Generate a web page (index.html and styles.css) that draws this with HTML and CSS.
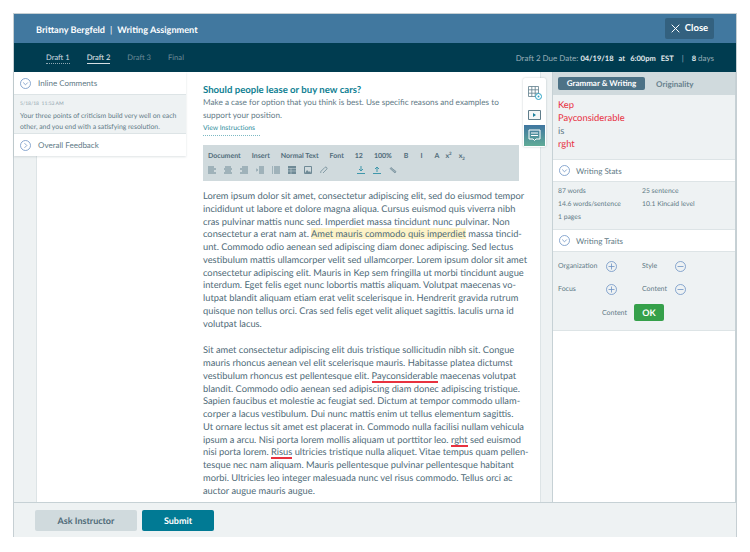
FILE: index.html
```html
<!DOCTYPE html>
<html lang="en">
<head>
<meta charset="utf-8">
<title>Writing Assignment</title>
<link rel="stylesheet" href="styles.css">
</head>
<body>
<div class="window">
  <header class="topbar">
    <div class="who"><span>Brittany Bergfeld</span><span class="pipe">|</span><span>Writing Assignment</span></div>
    <button class="close"><svg width="9" height="9" viewBox="0 0 9 9"><path d="M.7.7l7.6 7.6M8.3.7L.7 8.3" stroke="#fff" stroke-width="1" fill="none"/></svg>Close</button>
  </header>
  <nav class="drafts">
    <div class="tabs">
      <a class="done">Draft 1</a><a class="cur">Draft 2</a><a class="off">Draft 3</a><a class="off">Final</a>
    </div>
    <div class="due">Draft 2 Due Date: <b>04/19/18</b> <b class="gap">at</b> <b class="gap">6:00pm</b> <b class="gap">EST</b><span class="pipe2">|</span><b>8</b> days</div>
  </nav>
  <div class="main">
    <div class="gutter"></div>
    <section class="doc">
      <h1>Should people lease or buy new cars?</h1>
      <p class="prompt">Make a case for option that you think is best. Use specific reasons and examples to<br>support your position.</p>
      <a class="instr">View Instructions</a>
      <div class="toolbar">
        <div class="tb-row tb-words">
          <span class="w1">Document</span><span class="w2">Insert</span><span class="w3">Normal Text</span><span class="w4">Font</span><span class="w5">12</span><span class="w6">100%</span><span class="w7">B</span><span class="w8">I</span><span class="w9">A</span><span class="w10">x<sup>2</sup></span><span>x<sub>2</sub></span>
        </div>
        <div class="tb-row tb-icons">
          <svg width="8" height="8" viewBox="0 0 8 8"><path d="M0 1h6M0 3h8M0 5h6M0 7h8" stroke="#6f8a96"/></svg>
          <svg width="8" height="8" viewBox="0 0 8 8"><path d="M1 1h6M0 3h8M1 5h6M0 7h8" stroke="#6f8a96"/></svg>
          <svg width="8" height="8" viewBox="0 0 8 8"><path d="M2 1h6M0 3h8M2 5h6M0 7h8" stroke="#6f8a96"/></svg>
          <svg width="8" height="8" viewBox="0 0 8 8"><path d="M3 1h5M3 3h5M3 5h5M3 7h5M0 2.500l1.500 1.500L0 5.500" stroke="#6f8a96" fill="none"/></svg>
          <svg width="8" height="8" viewBox="0 0 8 8"><path d="M2 1h6M2 3h6M2 5h6M2 7h6M0 1h1M0 3h1M0 5h1M0 7h1" stroke="#6f8a96"/></svg>
          <svg width="8" height="8" viewBox="0 0 8 8"><path d="M0 0h8v8H0z" fill="#6f8a96"/><path d="M0 2.500h8M0 5h8M3 2v6" stroke="#cfd9dc" stroke-width=".5"/></svg>
          <svg width="8" height="8" viewBox="0 0 8 8"><path d="M.5.500h7v7h-7z" stroke="#6f8a96" fill="none"/><path d="M1 7l2-3 2 2 1-1 1 2z" fill="#6f8a96"/></svg>
          <svg width="8" height="8" viewBox="0 0 8 8"><path d="M1 7a1.200 1.200 0 0 1 0-1.700L5 1.300a1.300 1.300 0 0 1 1.800 1.800L3 7" stroke="#6f8a96" stroke-width=".8" fill="none"/></svg>
          <svg class="ic-far" width="8" height="8" viewBox="0 0 8 8"><path d="M4 0v4.500M2 3l2 2 2-2M0 7.500h8" stroke="#3f97ab" fill="none"/></svg>
          <svg width="8" height="8" viewBox="0 0 8 8"><path d="M4 6V1.500M2 3l2-2 2 2M0 7.500h8" stroke="#3f97ab" fill="none"/></svg>
          <svg width="8" height="8" viewBox="0 0 8 8"><path d="M1 2.500l1-1 5 4-1 1.500z" stroke="#6f8a96" fill="#9db0b9" stroke-width=".7"/></svg>
        </div>
      </div>
      <p class="body">Lorem ipsum dolor sit amet, consectetur adipiscing elit, sed do eiusmod tempor<br>incididunt ut labore et dolore magna aliqua. Cursus euismod quis viverra nibh<br>cras pulvinar mattis nunc sed. Imperdiet massa tincidunt nunc pulvinar. Non<br>consectetur a erat nam at. <mark>Amet mauris commodo quis imperdiet</mark> massa tincid-<br>unt. Commodo odio aenean sed adipiscing diam donec adipiscing. Sed lectus<br>vestibulum mattis ullamcorper velit sed ullamcorper. Lorem ipsum dolor sit amet<br>consectetur adipiscing elit. Mauris in Kep sem fringilla ut morbi tincidunt augue<br>interdum. Eget felis eget nunc lobortis mattis aliquam. Volutpat maecenas vo-<br>lutpat blandit aliquam etiam erat velit scelerisque in. Hendrerit gravida rutrum<br>quisque non tellus orci. Cras sed felis eget velit aliquet sagittis. Iaculis urna id<br>volutpat lacus.</p>
      <p class="body">Sit amet consectetur adipiscing elit duis tristique sollicitudin nibh sit. Congue<br>mauris rhoncus aenean vel elit scelerisque mauris. Habitasse platea dictumst<br>vestibulum rhoncus est pellentesque elit. <span class="typo">Payconsiderable</span> maecenas volutpat<br>blandit. Commodo odio aenean sed adipiscing diam donec adipiscing tristique.<br>Sapien faucibus et molestie ac feugiat sed. Dictum at tempor commodo ullam-<br>corper a lacus vestibulum. Dui nunc mattis enim ut tellus elementum sagittis.<br>Ut ornare lectus sit amet est placerat in. Commodo nulla facilisi nullam vehicula<br>ipsum a arcu. Nisi porta lorem mollis aliquam ut porttitor leo. <span class="typo">rght</span> sed euismod<br>nisi porta lorem. <span class="typo">Risus</span> ultricies tristique nulla aliquet. Vitae tempus quam pellen-<br>tesque nec nam aliquam. Mauris pellentesque pulvinar pellentesque habitant<br>morbi. Ultricies leo integer malesuada nunc vel risus commodo. Tellus orci ac<br>auctor augue mauris augue.</p>
    </section>
    <div class="gutter"></div>
    <aside class="side">
      <div class="sidetabs"><span class="pill">Grammar &amp; Writing</span><span class="orig">Originality</span></div>
      <div class="errors"><div class="err">Kep</div><div class="err">Payconsiderable</div><div>is</div><div class="err">rght</div></div>
      <div class="acc">
        <svg class="circ" width="11" height="11" viewBox="0 0 11 11"><circle cx="5.500" cy="5.500" r="5" stroke="#6d93c4" fill="none" stroke-width=".8"/><path d="M3.200 4.500l2.300 2.300 2.300-2.300" stroke="#6d93c4" fill="none" stroke-width=".8"/></svg>
        Writing Stats</div>
      <div class="stats">
        <span>87 words</span><span>25 sentence</span>
        <span>14.6 words/sentence</span><span>10.1 Kincaid level</span>
        <span>1 pages</span>
      </div>
      <div class="acc">
        <svg class="circ" width="11" height="11" viewBox="0 0 11 11"><circle cx="5.500" cy="5.500" r="5" stroke="#6d93c4" fill="none" stroke-width=".8"/><path d="M3.200 4.500l2.300 2.300 2.300-2.300" stroke="#6d93c4" fill="none" stroke-width=".8"/></svg>
        Writing Traits</div>
      <div class="traits">
        <div class="trow">
          <span class="tl">Organization</span><svg class="pm" width="11" height="11" viewBox="0 0 11 11"><circle cx="5.500" cy="5.500" r="5" stroke="#6d93c4" fill="none" stroke-width=".8"/><path d="M2.500 5.500h6M5.500 2.500v6" stroke="#6d93c4" stroke-width=".8"/></svg>
          <span class="tl2">Style</span><svg class="pm" width="11" height="11" viewBox="0 0 11 11"><circle cx="5.500" cy="5.500" r="5" stroke="#6d93c4" fill="none" stroke-width=".8"/><path d="M2.500 5.500h6" stroke="#6d93c4" stroke-width=".8"/></svg>
        </div>
        <div class="trow">
          <span class="tl">Focus</span><svg class="pm" width="11" height="11" viewBox="0 0 11 11"><circle cx="5.500" cy="5.500" r="5" stroke="#6d93c4" fill="none" stroke-width=".8"/><path d="M2.500 5.500h6M5.500 2.500v6" stroke="#6d93c4" stroke-width=".8"/></svg>
          <span class="tl2">Content</span><svg class="pm" width="11" height="11" viewBox="0 0 11 11"><circle cx="5.500" cy="5.500" r="5" stroke="#6d93c4" fill="none" stroke-width=".8"/><path d="M2.500 5.500h6" stroke="#6d93c4" stroke-width=".8"/></svg>
        </div>
        <div class="okrow"><span>Content</span><button class="ok">OK</button></div>
      </div>
    </aside>
    <div class="comments">
      <div class="chead">
        <svg width="11" height="11" viewBox="0 0 11 11"><circle cx="5.500" cy="5.500" r="5" stroke="#6d93c4" fill="none" stroke-width=".8"/><path d="M3.200 4.500l2.300 2.300 2.300-2.300" stroke="#6d93c4" fill="none" stroke-width=".8"/></svg>
        Inline Comments</div>
      <div class="cbody">
        <div class="cdate">5/18/18  11:53 AM</div>
        <div class="ctext">Your three points of criticism build very well on each<br>other, and you end with a satisfying resolution.</div>
      </div>
      <div class="chead cfoot">
        <svg width="11" height="11" viewBox="0 0 11 11"><circle cx="5.500" cy="5.500" r="5" stroke="#6d93c4" fill="none" stroke-width=".8"/><path d="M4.500 3.200l2.300 2.300-2.300 2.300" stroke="#6d93c4" fill="none" stroke-width=".8"/></svg>
        Overall Feedback</div>
    </div>
    <div class="rail">
      <div class="rail-i"><svg width="14" height="14" viewBox="0 0 14 14"><path d="M.5.500h10v10H.5zM.5 3.800h10M.5 7.200h10M3.800.500v10M7.200.500v10" stroke="#5f7d8b" fill="none" stroke-width=".8"/><circle cx="10.500" cy="10.500" r="3" fill="#fff" stroke="#2ba3c4"/><circle cx="10.500" cy="10.500" r="1" fill="#2ba3c4"/></svg></div>
      <div class="rail-i"><svg width="13" height="10" viewBox="0 0 13 10"><path d="M.5.500h12v9H.5z" stroke="#5f7d8b" fill="#f3f6f7"/><path d="M5 3l3 2-3 2z" fill="#1b7f9c"/></svg></div>
      <div class="rail-on"><svg width="13" height="13" viewBox="0 0 13 13"><path d="M1 1h11v9H8l-1.500 1.500L5 10H1z" stroke="#fff" fill="none"/><path d="M3 4h7M3 6.500h7" stroke="#fff"/></svg></div>
    </div>
  </div>
  <footer class="foot"><button class="ask">Ask Instructor</button><button class="submit">Submit</button></footer>
</div>
</body>
</html>
```
FILE: styles.css
```css
* { box-sizing: border-box; }
html, body { margin: 0; padding: 0; background: #fff; }
body { font-family: "Lato", "Liberation Sans", sans-serif; color: #4f6b78; text-rendering: geometricPrecision; }
button { text-rendering: geometricPrecision; }
.window { margin: 14px 0 0 14px; width: 722px; height: 523px; display: flex; flex-direction: column; box-shadow: 0 0 0 1px #c6cfd3; }
.topbar { height: 29px; background: #41789f; display: flex; align-items: center; justify-content: space-between; padding: 0 22px 0 22px; }
.who { color: #fff; font-size: 9.150px; font-weight: 700; padding-top: 1px; }
.pipe { margin: 0 5px; font-weight: 400; }
.close { width: 49px; height: 21px; border: 0; border-radius: 2px; background: #33617f; color: #fff; font: 700 9.500px "Lato", sans-serif; display: flex; align-items: center; justify-content: center; gap: 5px; padding: 0; }
.drafts { height: 29px; background: #003c50; display: flex; justify-content: space-between; align-items: center; padding: 0 22px 0 32px; font-size: 7.600px; }
.tabs { display: flex; gap: 17px; }
.tabs a { padding-bottom: 1px; }
.done { color: #d5dee2; border-bottom: 1px dotted #8fa8b3; }
.cur { color: #e3eaed; border-bottom: 1px solid #d5dee2; }
.off { color: #6c8a97; }
.due { color: #97adb7; font-size: 8px; }
.due b { color: #e3eaed; font-weight: 700; font-size: 7.500px; }
.gap { margin-left: 3px; }
.pipe2 { margin: 0 8px 0 8px; }
.main { flex: 1; min-height: 0; position: relative; display: grid; grid-template-columns: 22px 505px 11px 184px; border-bottom: 1px solid #c6d1d5; }
.gutter { background: #eef2f3; }
.doc { background: #fff; padding: 13px 0 0 166px; overflow: hidden; border-left: 1px solid #dde4e6; border-right: 1px solid #dde4e6; }
h1 { margin: 0; font-size: 9.600px; line-height: 11px; font-weight: 700; color: #0f7f93; }
.prompt { margin: 0; font-size: 8.200px; line-height: 13px; color: #5f7a86; white-space: nowrap; }
.instr { display: block; font-size: 6.800px; line-height: 11px; color: #2f8d9c; border-bottom: 1px dotted #7db9c3; width: 57px; padding-bottom: 1px; margin-top: 1px; }
.toolbar { width: 316px; height: 36px; margin-top: 9px; background: #d0dadd; padding: 5px 5px; font-size: 7px; font-weight: 700; color: #506c7a; }
.tb-row { display: flex; align-items: center; }
.tb-words { height: 11px; white-space: nowrap; }
.tb-words sup, .tb-words sub { font-size: 4.500px; line-height: 0; }
.w1, .w2, .w3, .w4, .w5 { margin-right: 11px; } .w6 { margin-right: 12px; } .w7, .w8 { margin-right: 12px; } .w9 { margin-right: 6px; } .w10 { margin-right: 7px; }
.tb-icons { margin-top: 5px; gap: 8px; }
.ic-far { margin-left: 21px; }
.body { margin: 9px 0 0; font-size: 9.300px; line-height: 12.750px; color: #4f6b78; white-space: nowrap; }
.body + .body { margin-top: 14px; }
mark { background: #fdf3c7; color: inherit; }
.typo { border-bottom: 2px solid #e8323f; }
.side { background: #fff; border-left: 1px solid #c6d1d5; border-right: 1px solid #c6d1d5; display: flex; flex-direction: column; }
.sidetabs { height: 23px; background: #d0dadd; display: flex; align-items: center; padding-left: 5px; font-size: 8px; font-weight: 700; }
.pill { width: 87px; height: 13px; line-height: 13px; text-align: center; color: #fff; background: #4d7286; border-radius: 2px; }
.orig { margin-left: 11px; color: #67818d; }
.errors { height: 65px; background: #eef2f3; padding: 4px 5px; font-size: 9.400px; line-height: 13px; color: #5f7a86; border-bottom: 1px solid #dde4e6; }
.err { color: #e8313f; }
.acc { height: 21px; background: #fff; display: flex; align-items: center; gap: 6px; padding-left: 6px; font-size: 8px; color: #5f7a86; }
.stats { height: 49px; background: #eef2f3; padding: 3px 5px 0; display: grid; grid-template-columns: 84px 1fr; grid-auto-rows: 13px; font-size: 6.800px; line-height: 13px; color: #5f7a86; border-top: 1px solid #dde4e6; border-bottom: 1px solid #dde4e6; }
.traits { height: 80px; background: #eef2f3; padding: 9px 5px 0; font-size: 7px; color: #5f7a86; border-top: 1px solid #dde4e6; border-bottom: 1px solid #dde4e6; }
.trow { height: 23px; display: grid; grid-template-columns: 48px 36px 33px 11px; align-items: start; line-height: 11px; }
.okrow { display: flex; align-items: center; gap: 7px; padding-left: 44px; margin-top: -3px; }
.ok { width: 30px; height: 17px; border: 0; border-radius: 2px; background: #35a04a; color: #fff; font: 700 9px "Lato", sans-serif; padding: 0; }
.comments { position: absolute; left: 0; top: 0; width: 172px; height: 84px; background: #fff; box-shadow: 0 1px 2px rgba(90,110,120,.2); color: #5f7a86; }
.chead { height: 22px; display: flex; align-items: center; gap: 7px; padding-left: 6px; font-size: 8px; }
.cbody { height: 40px; background: #eef2f3; padding: 4px 7px 0 6px; border-top: 1px solid #dde4e6; border-bottom: 1px solid #dde4e6; }
.cdate { font-size: 5px; line-height: 10px; color: #8fa3ad; white-space: pre; }
.ctext { margin-top: 2px; font-size: 6.850px; line-height: 10.500px; white-space: nowrap; }
.rail { position: absolute; left: 509px; top: 6px; width: 23px; height: 69px; background: #fff; border-radius: 2px; box-shadow: 0 0 2px rgba(90,110,120,.4); display: flex; flex-direction: column; align-items: center; padding-top: 4px; }
.rail-i { height: 22px; display: flex; align-items: center; justify-content: center; }
.rail-on { position: absolute; left: 1px; bottom: 1px; width: 21px; height: 21px; background: linear-gradient(#3f76a0, #60ab97); display: flex; align-items: center; justify-content: center; }
.foot { height: 34px; background: #eef2f3; display: flex; gap: 5px; padding: 7px 0 0 21px; }
.foot button { height: 21px; border: 0; border-radius: 2px; font: 700 9px "Lato", sans-serif; padding: 0; }
.ask { width: 102px; background: #d0dadd; color: #4f6b78; }
.submit { width: 72px; background: #017a94; color: #fff; }
```
